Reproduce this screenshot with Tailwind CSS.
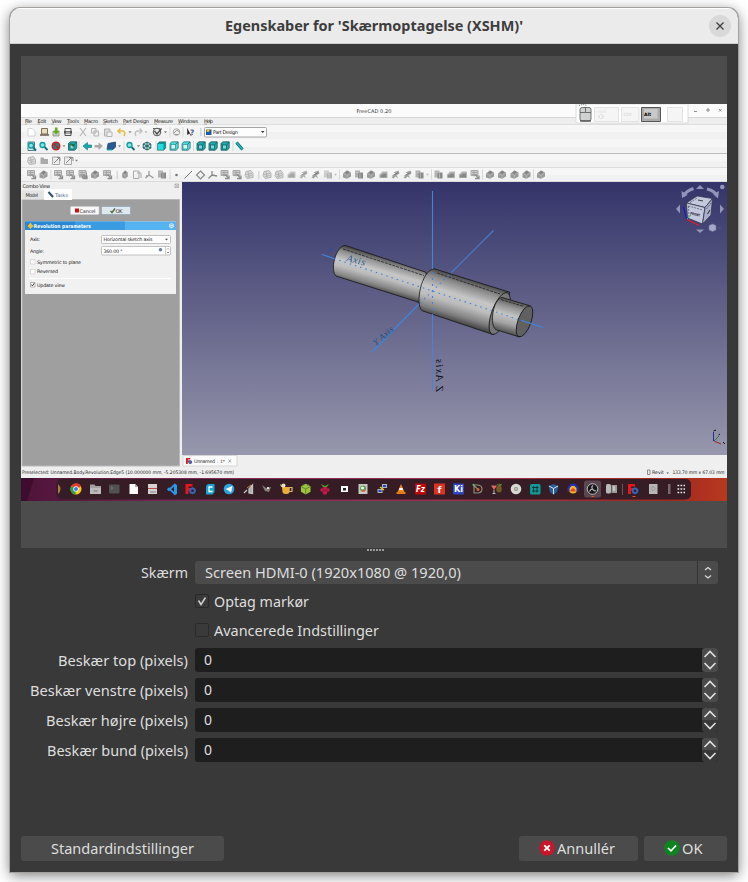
<!DOCTYPE html>
<html lang="da">
<head>
<meta charset="utf-8">
<title>Egenskaber for 'Skærmoptagelse (XSHM)'</title>
<script src="https://cdn.jsdelivr.net/npm/@tailwindcss/browser@4"></script>
</head>
<body class="h-[882px] w-[748px] overflow-hidden bg-white px-[10px] pt-2 font-['Noto_Sans',sans-serif]">
<svg class="absolute h-0 w-0" aria-hidden="true">
  <defs>
    <linearGradient id="cylA" gradientUnits="userSpaceOnUse" x1="385" y1="258" x2="376" y2="290"><stop offset="0" stop-color="#4c4c4c"/><stop offset=".15" stop-color="#8f8f8f"/><stop offset=".4" stop-color="#c6c6c6"/><stop offset=".6" stop-color="#bdbdbd"/><stop offset=".85" stop-color="#858585"/><stop offset="1" stop-color="#484848"/></linearGradient>
    <linearGradient id="cylB" gradientUnits="userSpaceOnUse" x1="471" y1="280" x2="458" y2="323"><stop offset="0" stop-color="#484848"/><stop offset=".15" stop-color="#888"/><stop offset=".4" stop-color="#c6c6c6"/><stop offset=".6" stop-color="#bdbdbd"/><stop offset=".85" stop-color="#808080"/><stop offset="1" stop-color="#444"/></linearGradient>
    <linearGradient id="cylC" gradientUnits="userSpaceOnUse" x1="516" y1="301" x2="507" y2="334"><stop offset="0" stop-color="#505050"/><stop offset=".2" stop-color="#909090"/><stop offset=".45" stop-color="#c4c4c4"/><stop offset=".7" stop-color="#a5a5a5"/><stop offset="1" stop-color="#484848"/></linearGradient>
    <path id="arr" d="M-1.6-.8h3.2L0 1.2z" fill="#888"/>
    <path id="sep" d="M0-5V5" stroke="#d9d9d9" stroke-width="1"/>
    <g id="dots" fill="#bbb"><path d="M-1-3h1.5v1H-1zM-1-1h1.5v1H-1zM-1 1h1.5v1H-1zM-1 3h1.5v1H-1z"/></g>
    <g id="tcube"><path d="M-4-2.5L-2-4.2H4.2V2L2.3 4.2H-4z" fill="#0f9595" stroke="#1f5b60" stroke-width=".5"/><path d="M-3.5-2H2v5.7h-5.500z" fill="#22dede"/></g>
    <g id="wcube"><path d="M-4-2.500L-2-4.200H4.200V2L2.300 4.200H-4z" fill="#48dada" stroke="#2a6b6e" stroke-width=".7"/><path d="M-3-1.500H1.500V3H-3z" fill="#dcfafa" stroke="#2a8b8e" stroke-width=".7"/><path d="M1.500-1.500L4-4" stroke="#17595c" stroke-width=".7"/></g>
    <g id="dcube"><path d="M-4-2.500L-2-4.200H4.200V2L2.300 4.200H-4z" fill="#1cabad" stroke="#1c595d" stroke-width=".8"/><path d="M-2.500-1H1.500V3H-2.500z" fill="#7bdcdd" stroke="#126065" stroke-width=".8"/><path d="M1.500-1L4-4M-2.500-1L-4-2.500" stroke="#104f54" stroke-width=".6"/></g>
    <g id="iso" fill="none" stroke="#154f52" stroke-width=".9"><path d="M0-4L3.800-2V2L0 4L-3.800 2V-2z" fill="#c6f0f0"/><path d="M-3.800-2L0 0L3.800-2M0 0V4M-3.800 2L0 0L3.800 2M0-4V0"/></g>
    <g id="mag"><path d="M1 1L4 4" stroke="#0b6f76" stroke-width="1.800"/><circle cx="-1" cy="-1" r="2.500" fill="#84e4e4" stroke="#0d9aa0" stroke-width="1.300"/></g>
    <g id="gs" fill="none" stroke="#a2a2a2" stroke-width=".9"><path d="M-4-4H3V1H-4z" fill="#cfcfcf"/><path d="M-3-2H3M-3 0H2M-1-4V2"/><path d="M0 0L4 4M4 1V4H0" stroke="#8e8e8e" stroke-width="1.300"/></g>
    <g id="gc"><path d="M-4-1L0-4.200L4-2V2L0 4.200L-4 3z" fill="#999"/><path d="M-4-1L0 1L4-2M0 1V4" stroke="#bdbdbd" stroke-width=".7" fill="none"/><path d="M-2-2L1-3.500L2-2L0-.500z" fill="#808080"/></g>
    <g id="gl"><path d="M-3-3L2-4L4-1V3L-2 4L-4 1z" fill="#dadada" stroke="#a8a8a8" stroke-width=".8"/><path d="M-3 0L3-1M-2 2L3 1M-1-3L0 3" stroke="#a8a8a8" stroke-width=".7"/></g>
    <g id="gp"><path d="M-4 3.500V0L-1-3H4V3.500z" fill="#b4b4b4"/><path d="M-3 3V1L0-1H3V3z" fill="#888"/></g>
    <g id="gr"><path d="M-4 3L0-1L-2-2L3-4L4-1L1 1L3 4L0 2L-2 4z" fill="#9f9f9f"/><path d="M-3 1L3-2" stroke="#777" stroke-width=".8"/></g>
    <g id="gb"><path d="M-4-4H1V3H-4z" fill="#b2b2b2"/><path d="M-1-2H4V4H-1z" fill="#8a8a8a"/><path d="M1-2V4M-3-2H0" stroke="#ccc" stroke-width=".6"/></g>
    <g id="fc"><path d="M-5-5H2V-2.500H-2V-1H1V1.500H-2V5H-5z" fill="#e8141e"/><circle cx="2" cy="1.800" r="2.300" fill="none" stroke="#3565b5" stroke-width="1.900"/><path d="M2-1.700V5.300M-1.500 1.800H5.500" stroke="#3565b5" stroke-width=".8"/><circle cx="2" cy="1.800" r="1" fill="#201524"/></g>
  </defs>
</svg>

<main class="flex h-[864px] flex-col overflow-hidden rounded-t-[10px] bg-[#393939] shadow-[0_0_0_1px_#a5a19e,0_3px_14px_rgba(0,0,0,0.55)]">
  <header class="flex h-9 shrink-0 items-center border-t border-b border-t-white border-b-[#cfcfcf] bg-[#ebebeb] pr-[7px] pl-[29px]">
    <h1 class="flex-1"><svg class="mx-auto block overflow-visible" width="320" height="24" viewBox="0 0 320 24"><text x="11" y="17.300" textLength="298" lengthAdjust="spacingAndGlyphs" fill="#3d3d3d" font-size="15" font-weight="bold">Egenskaber for 'Skærmoptagelse (XSHM)'</text></svg></h1>
    <button class="flex h-[22px] w-[22px] items-center justify-center rounded-full bg-[#d9d9d9]"><svg width="10" height="10" viewBox="0 0 10 10"><path d="M1.500 1.500L8.500 8.500M8.500 1.500L1.500 8.500" stroke="#3d3d3d" stroke-width="1.300"/></svg></button>
  </header>

  <section class="mx-[11px] mt-3 flex h-[492px] shrink-0 flex-col justify-center bg-[#4c4c4c]">
    <div class="flex h-[397px] flex-col bg-[#efefef] font-['DejaVu_Sans',sans-serif]">
      <svg class="block h-[21px] w-[706px] shrink-0" viewBox="21 104 706 21">
        <path d="M21 104H727V117H21z" fill="#fbfbfb"/><path d="M21 117H727V118H21z" fill="#d6d6d6"/><path d="M21 118H727V125H21z" fill="#eee"/><path d="M21 124.500H727" stroke="#dedede"/>
        <text x="356.500" y="112.800" font-size="5" textLength="35" fill="#333">FreeCAD 0.20</text>
        <g font-size="5" fill="#222"><text x="25" y="122.800" textLength="7">File</text><text x="37.500" y="122.800" textLength="9">Edit</text><text x="51.500" y="122.800" textLength="10">View</text><text x="67" y="122.800" textLength="12">Tools</text><text x="84" y="122.800" textLength="14">Macro</text><text x="103" y="122.800" textLength="15">Sketch</text><text x="123" y="122.800" textLength="26">Part Design</text><text x="154" y="122.800" textLength="19">Measure</text><text x="178" y="122.800" textLength="20">Windows</text><text x="204" y="122.800" textLength="9">Help</text></g>
        <path d="M25 124H27M37.500 124H40M51.500 124H54M67 124H69.500M84 124H87M103 124H106M123 124H126M154 124H157M178 124H181M204 124H207" stroke="#666" stroke-width=".5"/>
        <path d="M576 104H688V123H576z" fill="#fff" stroke="#d5d5d5" stroke-width=".8"/>
        <rect x="580" y="107.500" width="11" height="13.500" rx="2" fill="#cfd2d0" stroke="#555" stroke-width=".8"/><path d="M580 121H591" stroke="#333"/><path d="M585.500 107V112M580 112.500H591" stroke="#555" stroke-width=".8"/><path d="M579 105.500L583 104.500L587 105.500" stroke="#777" stroke-dasharray="1 1" fill="none"/>
        <g fill="#f5f5f5" stroke="#e2e2e2"><path d="M594.500 107.500H618.500V121.500H594.500zM621.500 107.500H639V121.500H621.500zM667.500 107.500H682.500V121.500H667.500z"/></g><text x="598" y="113" font-size="3.500" fill="#ddd">Shift</text><path d="M601 114L604 116.500H602.500V118.500H599.500V116.500H598z" fill="none" stroke="#d5d5d5" stroke-width=".6"/><text x="623.500" y="115.500" font-size="4.500" fill="#ccc">Ctrl</text>
        <path d="M641.500 107.500H660.500V121.500H641.500z" fill="#aaa" stroke="#555"/><path d="M644 109H657.500V118.500H644z" fill="#c9c9c9"/><text x="644" y="115.500" font-size="4.500" font-weight="bold">Alt</text>
        <path d="M694 111.500H697M707 109H709V111H707zM719 109L721.500 111.500M721.500 109L719 111.500" stroke="#777" stroke-width=".8" fill="none"/>
      </svg>
      <svg class="block h-[57px] w-[706px] shrink-0" viewBox="21 125 706 57">
        <path d="M21 125H727V182H21z" fill="#f6f6f6"/><path d="M21 132H727V139H21zM21 147H727V153H21zM21 161H727V167H21zM21 175H727V181H21z" fill="#f1f1f1"/><path d="M21 153.500H727" stroke="#bcbcbc"/><path d="M21 167.500H727M21 181.500H727" stroke="#dcdcdc"/>
        <path d="M28 128.500H32L35 131V136H28z" fill="#fff" stroke="#ccc" stroke-width=".8"/>
        <path d="M41.500 128.500H47.500V134H41.500z" fill="#e7dcc0" stroke="#7b7055"/><path d="M40 135H49" stroke="#675d47" stroke-width="1.500"/>
        <path d="M53 131H59V136H53z" fill="#c6cabb" stroke="#888" stroke-width=".7"/><path d="M55 127.500H57.500V131H59.500L56 134.500L53 131H55z" fill="#64ad17"/>
        <path d="M65 128.500H71V135.500H65z" fill="#eee" stroke="#444" stroke-width=".9"/><path d="M64 131H72V133.500H64z" fill="#555"/><path d="M66 132.200H70" stroke="#ccc"/>
        <g stroke="#b4b4b4" fill="none"><path d="M80 128L86 136M86 128L80 136" stroke-width="1.100"/><path d="M91.500 128.500H96V133H91.500zM94 131H98.500V136H94z" fill="#f0f0f0"/><path d="M104.500 129H110V136H104.500z" fill="#ddd"/><path d="M107 132H112V136.500H107z" fill="#f3f3f3"/></g>
        <path d="M118.500 131H123Q126 132 124 136M120.500 128.500L118 131L120.500 133.500" fill="none" stroke="#e3bd45" stroke-width="1.600"/><use href="#arr" x="130" y="132"/>
        <path d="M141.500 131H137Q134 132 136 136M139.500 128.500L142 131L139.500 133.500" fill="none" stroke="#c2c2c2" stroke-width="1.400"/><use href="#arr" x="146" y="132" opacity=".5"/>
        <circle cx="157" cy="132" r="3.800" fill="#e9e9e9" stroke="#555"/><path d="M154.500 131L157 134L161.500 128.500" fill="none" stroke="#444" stroke-width="1.200"/><path d="M153 128.500H160" stroke="#666"/><use href="#arr" x="165.500" y="132"/><use href="#sep" x="170" y="132"/>
        <circle cx="176.500" cy="132" r="3.300" fill="#eee" stroke="#aaa"/><path d="M174 133L177 130L179.500 132M175 134.500H178" stroke="#999" fill="none"/><use href="#sep" x="183" y="132"/>
        <path d="M187.500 128.500V134.500L189.500 133.200L191.300 136" fill="#222" stroke="#444" stroke-width=".8"/><text x="190" y="135" font-size="7.500" font-weight="bold" fill="#47668d">?</text><use href="#dots" x="201" y="131.500"/>
        <rect x="204.500" y="127.500" width="62" height="9.500" rx="1" fill="#fdfdfd" stroke="#a5a5a5"/><path d="M206 129.500H211.500V135H206z" fill="#1f5aa8"/><circle cx="208" cy="130.500" r="1.500" fill="#f3c52d"/><text x="213" y="134" font-size="5" textLength="25" fill="#222">Part Design</text><path d="M261 131H264.500L262.700 133z" fill="#333"/>

        <path d="M28 142H34.500V150.500H28z" fill="#d4eeee" stroke="#387077" stroke-width=".9"/><use href="#mag" x="32" y="146.500"/><use href="#mag" x="43.500" y="146"/>
        <circle cx="56" cy="146" r="3.800" fill="#2b7d82" stroke="#cc1c1c" stroke-width="1.400"/><path d="M53 143L59 149" stroke="#cc1c1c" stroke-width="1.300"/><use href="#arr" x="64" y="146"/><use href="#dcube" x="72.500" y="146"/><path d="M70 143L73 147L75 145" fill="#1f6f35"/><use href="#sep" x="79" y="146"/>
        <path d="M83 146L87.500 142.500V145H91.500V147.500H87.500V150z" fill="#16aeb3" stroke="#087277" stroke-width=".6"/><path d="M103 146L98.500 142.500V145H94.500V147.500H98.500V150z" fill="#aaa"/><path d="M108 143.500L115.500 142V147L113 149.500H107z" fill="#285b93" stroke="#163f66" stroke-width=".7"/><path d="M107 150H112" stroke="#18b9bd"/><use href="#arr" x="119.500" y="146"/><use href="#sep" x="124" y="146"/>
        <use href="#mag" x="130.500" y="146"/><use href="#arr" x="138.500" y="146"/><use href="#iso" x="147" y="146"/><use href="#sep" x="156" y="146"/><use href="#tcube" x="161.500" y="146"/><use href="#wcube" x="174" y="146"/><use href="#wcube" x="186" y="146"/><use href="#sep" x="193.500" y="146"/><use href="#dcube" x="201" y="146"/><use href="#dcube" x="213" y="146"/><use href="#dcube" x="225" y="146"/><use href="#sep" x="233" y="146"/><path d="M236.500 142.500L242.500 149.500" stroke="#0a6970" stroke-width="3"/><path d="M236.500 142.500L242.500 149.500" stroke="#1bb8bd" stroke-width="1.700"/>

        <use href="#gl" x="31.500" y="160.500"/><path d="M40.500 157.500H43.500L44.500 159H48V164H40.500z" fill="#aaa"/><g fill="#ececec" stroke="#aaa"><path d="M52.500 157H59.500V164.500H52.500zM64.500 157H71.500V164.500H64.500z"/><path d="M54 163L60 157M57 157.500H60V161M66 163L72 157M69 157.500H73V161" fill="none" stroke="#888"/></g><use href="#arr" x="76.500" y="160.500"/>

        <use href="#gs" x="31.500" y="174.500"/><use href="#gc" x="43.500" y="174.500"/><use href="#sep" x="51" y="174.500"/><use href="#gs" x="58.500" y="174.500"/><use href="#gs" x="70.500" y="174.500"/><use href="#gb" x="83" y="174.500"/><use href="#gs" x="83" y="174.500"/><use href="#gc" x="95" y="174.500"/><use href="#gs" x="107.500" y="174.500"/><use href="#dots" x="117.500" y="174.500"/>
        <use href="#gc" x="125" y="174.500" transform="translate(37.500 0) scale(.7 1)"/><path d="M133.500 171H139V178.500H133.500zM137 173H141V178" fill="none" stroke="#aaa"/><path d="M149 171V175L145.500 178M149 175L153.500 178M146 176H148" stroke="#999" fill="none" stroke-width="1.300"/><use href="#gb" x="162" y="174.500"/><use href="#sep" x="170" y="174.500"/><circle cx="176.500" cy="175" r="1.300" fill="#777"/><path d="M184.500 178.500L192 171" stroke="#777"/><path d="M200.500 171L204.500 175L200.500 179L196.500 175z" fill="none" stroke="#888" stroke-width="1.200"/><path d="M212 171V175L208.500 178.500M212 175L217 176" stroke="#888" fill="none" stroke-width="1.300"/><use href="#gs" x="225" y="174.500"/><use href="#gs" x="237" y="174.500"/><use href="#gl" x="249" y="174.500"/><use href="#dots" x="259" y="174.500"/>
        <use href="#gl" x="267" y="174.500"/><use href="#gl" x="279" y="174.500"/><use href="#gp" x="291.500" y="174.500" opacity=".7"/><use href="#gr" x="303.500" y="174.500" opacity=".8"/><use href="#gr" x="315.500" y="174.500"/><use href="#gb" x="328" y="174.500" opacity=".6"/><use href="#arr" x="335.500" y="174.500" opacity=".5"/><use href="#sep" x="339.500" y="174.500"/>
        <use href="#gc" x="347" y="174.500"/><use href="#gb" x="359" y="174.500"/><use href="#gc" x="371" y="174.500"/><use href="#gp" x="383.500" y="174.500"/><use href="#gr" x="395.500" y="174.500"/><use href="#gr" x="407.500" y="174.500"/><use href="#gb" x="419.500" y="174.500"/><use href="#arr" x="427.500" y="174.500" opacity=".5"/><use href="#sep" x="431.500" y="174.500"/>
        <use href="#gb" x="438.500" y="174.500"/><use href="#gp" x="451" y="174.500"/><use href="#gp" x="463" y="174.500"/><use href="#gs" x="475" y="174.500"/><use href="#sep" x="482.500" y="174.500"/><use href="#gc" x="490" y="174.500"/><use href="#gc" x="502" y="174.500"/><use href="#gc" x="514.500" y="174.500"/><use href="#gc" x="526.500" y="174.500"/><use href="#sep" x="533.500" y="174.500"/><use href="#gc" x="541" y="174.500"/>
      </svg>

      <div class="flex h-[285px] shrink-0">
        <svg class="block h-[285px] w-[161px] shrink-0" viewBox="21 182 161 285">
          <path d="M21 182H182V467H21z" fill="#efefef"/><path d="M22 199.500H179.500V466H22z" fill="#9f9f9f" stroke="#b9b9b9"/>
          <text x="22.500" y="187.800" font-size="5" textLength="27.500" fill="#222">Combo View</text><path d="M175 184H178.500V187.500H175zM175 184L178.500 187.500M178.500 184L175 187.500" stroke="#999" stroke-width=".6" fill="none"/>
          <path d="M22 190.500H43.500V199.500H22z" fill="#e3e3e3"/><path d="M44 189H72V200H44z" fill="#fff"/><text x="25.500" y="197" font-size="5" textLength="12.500" fill="#333">Model</text><path d="M48.500 192L53 197" stroke="#274d7a" stroke-width="2"/><text x="55" y="197" font-size="5" textLength="13" fill="#4d6a8d">Tasks</text>
          <rect x="70.500" y="206.500" width="28.500" height="8" rx="1" fill="#f8f8f8" stroke="#ccc" stroke-width=".7"/><path d="M75 208.500H79V212.500H75z" fill="#c11"/><text x="79.500" y="212.600" font-size="5" textLength="16" fill="#333">Cancel</text>
          <rect x="101.500" y="206.500" width="29" height="8" rx="1" fill="#dfe7ef" stroke="#8ba3bb" stroke-width=".7"/><path d="M110.500 211L112 212.500L115 208.500" stroke="#56743b" stroke-width="1.500" fill="none"/><text x="115.500" y="212.600" font-size="5.200" textLength="7" fill="#333">OK</text>
          <path d="M25 221.500H176V294H25z" fill="#f1f1f1"/><path d="M25 221.500H176V230H25z" fill="#55b3f2"/><path d="M25 221.500H75V230H25z" fill="#2988d1"/><path d="M75 221.500H125V230H75z" fill="#3b9be0"/><path d="M30.500 222.500L31.800 224.500L34 226L31.800 227.500L30.500 229L29 227.500L27.500 226L29 224.500z" fill="#f1c232"/><text x="33.800" y="228" font-size="5.200" font-weight="bold" textLength="57" lengthAdjust="spacingAndGlyphs" fill="#fff">Revolution parameters</text><circle cx="171.500" cy="225.800" r="2.500" fill="#d9eefc"/><path d="M170 225.500L171.500 224L173 225.500M170 227.500L171.500 226L173 227.500" stroke="#3a8fd0" stroke-width=".6" fill="none"/>
          <g font-size="4.800" fill="#222"><text x="30" y="241" textLength="10">Axis:</text><text x="30" y="252.500" textLength="14">Angle:</text><text x="37" y="263.500" textLength="44">Symmetric to plane</text><text x="37" y="273.300" textLength="21">Reversed</text><text x="37" y="286.800" textLength="28">Update view</text></g>
          <g fill="#fff" stroke="#aaa" stroke-width=".7"><rect x="101.500" y="235.500" width="69" height="8" rx="1"/><rect x="101.500" y="246.500" width="69" height="8.500" rx="1"/></g><path d="M30.500 259.500H35V264H30.500zM30.500 269.500H35V274H30.500z" fill="#fff" stroke="#ccc" stroke-width=".7"/><path d="M30.500 282.500H35V287H30.500z" fill="#fff" stroke="#999" stroke-width=".7"/><text x="103.500" y="241.200" font-size="4.800" textLength="49" fill="#222">Horizontal sketch axis</text><path d="M165 238.700H168L166.500 240.500z" fill="#555"/><text x="103.500" y="252.500" font-size="4.800" textLength="19" fill="#222">360.00 °</text><circle cx="160.500" cy="249.800" r="1.800" fill="#6b829b"/><path d="M165.500 246.500V255" stroke="#bbb" stroke-width=".7"/><path d="M167 249.500L168 248.500L169 249.500M167 252L168 253L169 252" fill="none" stroke="#555" stroke-width=".6"/><path d="M31.500 284.500L32.500 286L34.300 283" stroke="#222" stroke-width=".8" fill="none"/><path d="M29 278.500H171" stroke="#fff"/>
        </svg>
        <div class="flex w-[545px] flex-col">
          <svg class="block h-[273px] w-[545px] bg-linear-to-b/srgb from-[#34346a] to-[#9797ad]" viewBox="182 182 545 273">
            <path d="M493.500 230.500L451 273" stroke="#4679c8" stroke-width="1.200"/>
            <g stroke="#161616" stroke-width=".8">
              <path d="M345 245.300L426 272.300L430 306L418.700 302.300L336 276C330 271 335 247 345 245.300z" fill="url(#cylA)"/>
              <path d="M434 268.700L510 292.300L493.500 334.700L422 310.700C415 304 421 271 434 268.700z" fill="url(#cylB)"/>
              <ellipse cx="499.700" cy="313.500" rx="8" ry="22" transform="rotate(20 499.700 313.500)" fill="#777"/>
              <path d="M502 297.500L530 305.800L519.500 337L496 329.700C489 325 493 299 502 297.500z" fill="url(#cylC)"/>
              <ellipse cx="524.500" cy="321.300" rx="6.500" ry="16.300" transform="rotate(20 524.500 321.300)" fill="#606060"/>
            </g>
            <path d="M343 249L424 275.500M437 273L500 294M501 299.500L524 306.500" stroke="#222" stroke-width=".8" stroke-dasharray="3 1"/>
            <g stroke="#3d86e0" stroke-width="1.100" fill="none">
              <path d="M432.500 191V269M432.500 314V391"/><path d="M432.500 272V312" stroke-dasharray="2 4"/><path d="M418.500 304.500L372.500 351.500M322 254.500L334 258.500M521 320.300L543 327.500"/><path d="M334 258.500L521 320.300M420 303L451 273" stroke-dasharray="1.500 4"/>
            </g>
            <g font-family="Liberation Serif, serif" font-style="italic" font-size="10"><text transform="translate(346 261) rotate(14)" fill="#1f5791" textLength="19">Axis</text><text transform="translate(327 252) rotate(14)" fill="#28528e" font-size="8">X</text><text transform="translate(376 346) rotate(-41)" fill="#244e80" font-size="9" textLength="24">Y Axis</text><text transform="translate(436 392) rotate(-90) scale(1 -1)" font-size="11" textLength="33" fill="#111">Z Axis</text></g>
            <g fill="#9195ba"><path d="M700 185L704 189H696zM700 233L704 229.500H696zM676 209L680 204.500V213.500zM724 209L720 204.500V213.500z"/><circle cx="722.300" cy="187" r="2.300"/></g><path d="M683.500 196Q686 191 693.500 188.500M707 189Q715 191 717 196" fill="none" stroke="#9195ba" stroke-width="3"/><path d="M681.500 191L682 198L687.500 195zM719 191L718 198.500L713 194z" fill="#9195ba"/>
            <g fill="#c3c8dd" stroke="#36394c" stroke-width=".8" stroke-linejoin="round"><path d="M686.500 203L697 196L712.500 198.500L705 207.500z"/><path d="M686.500 203L705 207.500L702.500 224L687.500 218z"/><path d="M705 207.500L712.500 198.500L711 215L702.500 224z" fill="#a9afca"/></g><path d="M688.500 206L703 210M706.500 209L711 203M688.500 206L689 217M690 202.500L698 197.500" fill="none" stroke="#343850" stroke-width=".6" stroke-dasharray="2 1"/><text transform="translate(690 214.500) rotate(12)" font-size="3.500" font-weight="bold" textLength="10" lengthAdjust="spacingAndGlyphs" fill="#222">FRONT</text><path d="M698 200L703 201M707.500 214L710 210" stroke="#444" stroke-width="1.200"/>
            <path d="M683.500 207L686.500 219" stroke="#1111ef"/><path d="M687 219.500L699 225.500" stroke="#e21c2c" stroke-width="1.300"/><path d="M687 219L691 215" stroke="#33cd42"/><path d="M709 225.500L712.500 224L716 225.500V230L712.500 231.500L709 230z" fill="#a5a8c6" stroke="#777b9b" stroke-width=".6"/><path d="M718 227H721.500L719.700 229z" fill="#555a7b"/>
            <path d="M713.500 432V441" stroke="#242c91"/><path d="M714 441L719 436" stroke="#267e35"/><path d="M714 441L721 444" stroke="#a12424"/><path d="M723 442L725 444M713.500 431L716 430M718.500 435L720 434" stroke="#111"/>
          </svg>
          <svg class="block h-3 w-[545px]" viewBox="182 455 545 12"><path d="M182 455H727V467H182z" fill="#efefef"/><path d="M183 455.500H237V466H183z" fill="#fafafa" stroke="#ccc" stroke-width=".7"/><use href="#fc" transform="translate(189 461) scale(.6)"/><text x="194" y="462.800" font-size="4.800" textLength="21" fill="#333">Unnamed</text><text x="217" y="462.800" font-size="4.500" fill="#444">: 1*</text><path d="M228.500 459.500L231 462.500M231 459.500L228.500 462.500" stroke="#888" stroke-width=".7"/></svg>
        </div>
      </div>
      <svg class="block h-[11px] w-[706px] shrink-0" viewBox="21 467 706 11"><path d="M21 467H727V478H21z" fill="#efefef"/><g font-size="4.800" fill="#222"><text x="22" y="474.300" textLength="212" lengthAdjust="spacingAndGlyphs">Preselected: Unnamed.Body.Revolution.Edge5 (10.000000 mm, -5.205308 mm, -1.695670 mm)</text><text x="652" y="474.300" textLength="12">Revit</text><text x="672.500" y="474.300" textLength="52" lengthAdjust="spacingAndGlyphs">133.70 mm x 67.03 mm</text></g><path d="M647.500 470H650V474.500H647.500z" fill="none" stroke="#666" stroke-width=".7"/><path d="M666.500 472.500H669L667.700 474z" fill="#555"/></svg>
      <svg class="block h-[23px] w-[706px] shrink-0" viewBox="21 478 706 23">
        <defs><linearGradient id="wall"><stop offset="0" stop-color="#4d1337"/><stop offset=".25" stop-color="#7e2a5c"/><stop offset=".6" stop-color="#9b3050"/><stop offset=".92" stop-color="#a3281f"/><stop offset="1" stop-color="#b6391f"/></linearGradient></defs>
        <path d="M21 478H727V501H21z" fill="url(#wall)"/><path d="M21 478H34L27 501H21z" fill="#3c0d2c"/><rect x="56.500" y="479" width="634.500" height="20.500" rx="5" fill="#351c25"/>
        <path d="M58 484Q63 489 58 494z" fill="#a77c49"/>
        <circle cx="76" cy="489" r="5.500" fill="#f9c91b"/><path d="M76 489L71.200 486.200A5.500 5.500 0 0 1 81 486.500z" fill="#e33b2e"/><path d="M76 489L71.200 486.200A5.500 5.500 0 0 0 75.500 494.500z" fill="#2aa24c"/><circle cx="76" cy="489" r="2.700" fill="#fff"/><circle cx="76" cy="489" r="2" fill="#3b79e6"/>
        <path d="M90 484.500H94.500L95.500 486H101V494H90z" fill="#a4a1a1"/><path d="M90 488H101V494H90z" fill="#bcbaba"/><path d="M93.500 491H97.500" stroke="#777"/>
        <rect x="109" y="484.500" width="10.500" height="9" rx="1" fill="#515151"/><path d="M111 486.500L112.500 488L111 489.500" stroke="#aaa" stroke-width=".6" fill="none"/>
        <path d="M129.500 484H135L138 487V494H129.500z" fill="#fafafa"/><path d="M135 484V487H138z" fill="#aaa"/>
        <rect x="148" y="484" width="9" height="10" fill="#d7d1d0"/><path d="M148 488.500H157" stroke="#b65151"/><path d="M150 491H156V493H150z" fill="#aaa"/>
        <path d="M175.500 484L169 490L167.500 488.800M167.500 490L169 488.500L175.500 494.500" fill="none" stroke="#2993df" stroke-width="1.800"/><path d="M174 484L177 485V494L174 495z" fill="#229bee"/><use href="#fc" x="190.500" y="489"/>
        <path d="M206 486L208 484H214.500V492L212.500 494.500H206z" fill="#18a4d3"/><path d="M212.500 487H209V491.500H212.500" stroke="#fff" stroke-width="1.300" fill="none"/>
        <circle cx="229" cy="489" r="5.300" fill="#2ba5df"/><path d="M225.500 489L232.500 486L231 492.500L228.500 490.500z" fill="#fff"/>
        <path d="M244 493L247 490M249 493V489L252.500 485V493.500z" stroke="#c5c5c5" stroke-width="1.300" fill="#aaa"/><path d="M247 488L251 485" stroke="#c78931"/>
        <path d="M262 485L266 488L271 487L269 492L265 491z" fill="#857f78"/><circle cx="268" cy="488" r="1" fill="#fff"/>
        <path d="M282 487H290L289.500 492Q289 494 287 494H285Q283 494 282.500 492z" fill="#e9ae39"/><path d="M290 487.500H292V491.500H289M282 487L280.500 484.500" stroke="#ddb96d" fill="none" stroke-width="1.200"/><circle cx="283.500" cy="485.500" r="2" fill="#e4dfc5"/>
        <path d="M305.700 483.700L310.500 486.200V491.800L305.700 494.500L300.900 491.800V486.200z" fill="#9bc53c"/><path d="M301 486.500L305.700 489L310.500 486.500M305.700 489V494M303 484L304 486M308.500 484L307.500 486" stroke="#55782b" stroke-width=".8" fill="none"/>
        <g fill="#c51a4a"><circle cx="325" cy="488" r="2"/><circle cx="322" cy="490" r="1.700"/><circle cx="328" cy="490" r="1.700"/><circle cx="325" cy="492.500" r="2.200"/></g><path d="M321 484L325 486L329 484L327 487H323z" fill="#55972c"/>
        <path d="M341 486H348V492H341z" fill="#fff"/><path d="M343 488H346V490.500H343z" fill="#222"/>
        <rect x="358.500" y="484" width="9" height="10" fill="#c9c8c2"/><circle cx="363" cy="488.500" r="3" fill="#5b9c46"/><path d="M363 489L366 491L362 492z" fill="#df5a36"/><circle cx="362.500" cy="488" r="1.500" fill="#fff"/>
        <path d="M382 484H387V488H382zM377.500 489H382.500V493H377.500z" fill="#acb7c4"/><path d="M383 485H386V487H383zM378.500 490H381.500V492H378.500z" fill="#2749b5"/><path d="M380 487L384 490" stroke="#f1dc36" stroke-width="1.300"/>
        <path d="M401 484L404.500 492H397.500z" fill="#ee8521"/><path d="M399.500 488H402.500L403 490H399z" fill="#fff"/><path d="M396.500 492H405.500V494H396.500z" fill="#e67a17"/>
        <rect x="415" y="483.500" width="11" height="11" fill="#b90a09"/><text x="416" y="492" font-size="8" font-style="italic" font-weight="bold" textLength="9" lengthAdjust="spacingAndGlyphs" fill="#fff">Fz</text>
        <rect x="434" y="483.500" width="11" height="11" fill="#d93324"/><text x="437.500" y="492.500" font-size="9" font-weight="bold" fill="#fff">f</text>
        <rect x="453" y="483.500" width="11" height="11" rx="1" fill="#2c48c6"/><text x="454" y="492" font-size="8" font-weight="bold" textLength="9" lengthAdjust="spacingAndGlyphs" fill="#fff">Ki</text>
        <path d="M474 485H477Q482 485 482 489T477 493H474zM473 485L479 490" stroke="#91917c" fill="none" stroke-width="1.100"/><circle cx="478" cy="489.500" r="1.500" fill="#ca6a2c"/><circle cx="473.500" cy="484.800" r="1" fill="#5c5"/>
        <ellipse cx="499" cy="489" rx="2.800" ry="3.500" fill="#6d5a27"/><path d="M497 484.500L501 486M499 484L502 485" stroke="#5d8a35"/><path d="M491 485.500H497L494 490z" fill="#e36460"/><path d="M494 490V493.500M492.500 493.500H495.500" stroke="#ddd" stroke-width=".8"/>
        <circle cx="516" cy="489" r="5.300" fill="#d6d8d1"/><circle cx="516" cy="489" r="2" fill="#8b8e83"/><circle cx="516" cy="489" r=".8" fill="#fff"/>
        <rect x="530" y="484" width="10.500" height="10.500" rx="1.500" fill="#0c9c96"/><path d="M533.500 486V492.500M537 486V492.500M532 487.500H538.500M532 491H538.500" stroke="#12363a" stroke-width="1"/>
        <path d="M548.500 486L553.500 484L558.500 486L557 492L553.500 495L550 492z" fill="#2a5b93"/><path d="M549 486L553.500 488.500L558 486M553.500 488.500V494" stroke="#d5e5f5" fill="none"/>
        <circle cx="573" cy="489.500" r="4" fill="#f4b81c"/><path d="M568.500 491.500V488Q573 481 577.500 488V491.500" stroke="#202fc1" stroke-width="2" fill="none"/><path d="M570.500 490L573 488L575.500 490V491.500H570.500z" fill="#e34624"/>
        <rect x="584" y="480.500" width="17" height="17" rx="2.500" fill="#5b4650"/><circle cx="592.500" cy="489" r="5.300" fill="#171719" stroke="#d7d7d7" stroke-width=".8"/><path d="M592.500 489Q591 487 593 485.500M592.500 489Q590.500 489 589.500 491.500M592.500 489Q594 491.500 596 490.500" fill="none" stroke="#bbb" stroke-width="1.200"/><path d="M591.500 496.500H594M632.500 496.500H635.500" stroke="#e95420"/>
        <rect x="606" y="484" width="5" height="9.500" rx="1.500" fill="#b7bab7"/><path d="M611.500 485H617V493H611.500z" fill="#9a9c99"/><path d="M614 486V491" stroke="#eee"/><path d="M622.500 484V495" stroke="#6b5358"/><use href="#fc" x="633" y="489"/>
        <rect x="649" y="484" width="8.500" height="10" fill="#b6b7b5"/><circle cx="653" cy="488.500" r="2" fill="none" stroke="#999"/><path d="M668 484H670.500V494H668z" fill="#79676b"/>
        <path d="M677.500 485.500H685M677.500 489H685M677.500 492.500H685" stroke="#eee" stroke-width="1.700" stroke-dasharray="1.700 1.300"/>
      </svg>
    </div>
  </section>

  <div class="flex h-1 shrink-0 items-center justify-center gap-px pl-[3px]"><i class="h-0.5 w-0.5 bg-[#999]"></i><i class="h-0.5 w-0.5 bg-[#999]"></i><i class="h-0.5 w-0.5 bg-[#999]"></i><i class="h-0.5 w-0.5 bg-[#999]"></i><i class="h-0.5 w-0.5 bg-[#999]"></i><i class="h-0.5 w-0.5 bg-[#999]"></i></div>

  <form class="mt-[9px] grid grid-cols-[178px_523px] gap-x-[7px] text-[14px] leading-6 whitespace-nowrap text-[#dedede]">
    <label class="h-[33px] text-right"><svg class="ml-auto h-6 w-[47px]" viewBox="0 0 47 24"><text x="0" y="17" font-size="14" textLength="47" lengthAdjust="spacingAndGlyphs" fill="currentColor">Skærm</text></svg></label>
    <div class="flex h-[23px] rounded-[3px] bg-[#4b4b4b]"><span class="w-[503px] border-r border-[#333] pl-[10px]"><svg class="h-6 w-[258px]" viewBox="0 0 258 24"><text x="0" y="17" font-size="14" textLength="256" lengthAdjust="spacingAndGlyphs" fill="currentColor">Screen HDMI-0 (1920x1080 @ 1920,0)</text></svg></span><svg class="h-[23px] w-5" viewBox="0 0 20 23"><path d="M7 9L10 6.500L13 9M7 14.500L10 17L13 14.500" fill="none" stroke="#ddd" stroke-width="1.200"/></svg></div>
    <span></span>
    <label class="flex h-[29px] gap-[5px]"><svg class="h-[14px] w-[14px]" viewBox="0 0 14 14"><rect x=".5" y=".5" width="13" height="13" rx="1.500" fill="#3a3a3a" stroke="#292929"/><path d="M3.500 6.500L6 10.500L10.500 3.500" fill="none" stroke="#d0d0d0" stroke-width="1.500"/></svg><svg class="-mt-1 h-6 w-[96px]" viewBox="0 0 96 24"><text x="0" y="17" font-size="14" textLength="95" lengthAdjust="spacingAndGlyphs" fill="currentColor">Optag markør</text></svg></label>
    <span></span>
    <label class="flex h-[25px] gap-[5px]"><svg class="h-[14px] w-[14px]" viewBox="0 0 14 14"><rect x=".5" y=".5" width="13" height="13" rx="1.500" fill="#3a3a3a" stroke="#2b2b2b"/></svg><svg class="-mt-1 h-6 w-[166px]" viewBox="0 0 166 24"><text x="0" y="17" font-size="14" textLength="165" lengthAdjust="spacingAndGlyphs" fill="currentColor">Avancerede Indstillinger</text></svg></label>

    <label class="h-[30px]"><svg class="ml-auto h-6 w-[130px]" viewBox="0 0 130 24"><text x="0" y="17.500" font-size="14" textLength="130" lengthAdjust="spacingAndGlyphs" fill="currentColor">Beskær top (pixels)</text></svg></label>
    <div class="flex h-6 rounded-[3px] bg-[#1e1e1e]"><span class="w-[507px] pl-[9px]">0</span><svg class="h-6 w-4 rounded-[3px] bg-[#4b4b4b]" viewBox="0 0 16 24"><path d="M2.500 9L8 3.500L13.500 9M2.500 15L8 20.500L13.500 15" fill="none" stroke="#e0e0e0" stroke-width="1.600"/></svg></div>
    <label class="h-[30px]"><svg class="ml-auto h-6 w-[158px]" viewBox="0 0 158 24"><text x="0" y="17.500" font-size="14" textLength="158" lengthAdjust="spacingAndGlyphs" fill="currentColor">Beskær venstre (pixels)</text></svg></label>
    <div class="flex h-6 rounded-[3px] bg-[#1e1e1e]"><span class="w-[507px] pl-[9px]">0</span><svg class="h-6 w-4 rounded-[3px] bg-[#4b4b4b]" viewBox="0 0 16 24"><path d="M2.500 9L8 3.500L13.500 9M2.500 15L8 20.500L13.500 15" fill="none" stroke="#e0e0e0" stroke-width="1.600"/></svg></div>
    <label class="h-[30px]"><svg class="ml-auto h-6 w-[142px]" viewBox="0 0 142 24"><text x="0" y="17.500" font-size="14" textLength="142" lengthAdjust="spacingAndGlyphs" fill="currentColor">Beskær højre (pixels)</text></svg></label>
    <div class="flex h-6 rounded-[3px] bg-[#1e1e1e]"><span class="w-[507px] pl-[9px]">0</span><svg class="h-6 w-4 rounded-[3px] bg-[#393939]" viewBox="0 0 16 24"><path d="M0 0H16V12H0z" fill="#4b4b4b"/><path d="M2.500 9L8 3.500L13.500 9M2.500 15L8 20.500L13.500 15" fill="none" stroke="#e0e0e0" stroke-width="1.600"/></svg></div>
    <label class="h-[30px]"><svg class="ml-auto h-6 w-[141px]" viewBox="0 0 141 24"><text x="0" y="17.500" font-size="14" textLength="141" lengthAdjust="spacingAndGlyphs" fill="currentColor">Beskær bund (pixels)</text></svg></label>
    <div class="flex h-6 rounded-[3px] bg-[#1e1e1e]"><span class="w-[507px] pl-[9px]">0</span><svg class="h-6 w-4 rounded-[3px] bg-[#393939]" viewBox="0 0 16 24"><path d="M0 0H16V12H0z" fill="#4b4b4b"/><path d="M2.500 9L8 3.500L13.500 9M2.500 15L8 20.500L13.500 15" fill="none" stroke="#e0e0e0" stroke-width="1.600"/></svg></div>
  </form>

  <footer class="mx-[11px] mt-auto mb-[11px] flex h-[25px] gap-1.5 text-[14px] text-[#dedede]">
    <button class="mr-auto w-[203px] rounded-[3px] bg-[#4b4b4b]"><svg class="mx-auto h-[25px] w-[144px]" viewBox="0 0 144 25"><text x="0" y="18" font-size="14" textLength="143" lengthAdjust="spacingAndGlyphs" fill="currentColor">Standardindstillinger</text></svg></button>
    <button class="flex w-[119px] items-center justify-center gap-0.5 rounded-[3px] bg-[#4b4b4b] pr-[3px]"><svg class="-mt-px h-4 w-4" viewBox="0 0 16 16"><circle cx="8" cy="8" r="7.800" fill="#c7162b"/><path d="M5.300 5.300L10.700 10.700M10.700 5.300L5.300 10.700" stroke="#fff" stroke-width="1.900"/></svg><svg class="h-[25px] w-[58px]" viewBox="0 0 58 25"><text x="0" y="18" font-size="14" textLength="58" lengthAdjust="spacingAndGlyphs" fill="currentColor">Annullér</text></svg></button>
    <button class="flex w-[83px] items-center justify-center gap-0.5 rounded-[3px] bg-[#4b4b4b] pr-[5px]"><svg class="-mt-px h-4 w-4" viewBox="0 0 16 16"><circle cx="8" cy="8" r="7.800" fill="#0e8420"/><path d="M4 8L7 10.800L12 5.500" fill="none" stroke="#fff" stroke-width="1.700"/></svg><svg class="h-[25px] w-[21px]" viewBox="0 0 21 25"><text x="0" y="18" font-size="14" textLength="20.500" lengthAdjust="spacingAndGlyphs" fill="currentColor">OK</text></svg></button>
  </footer>
</main>
</body>
</html>
